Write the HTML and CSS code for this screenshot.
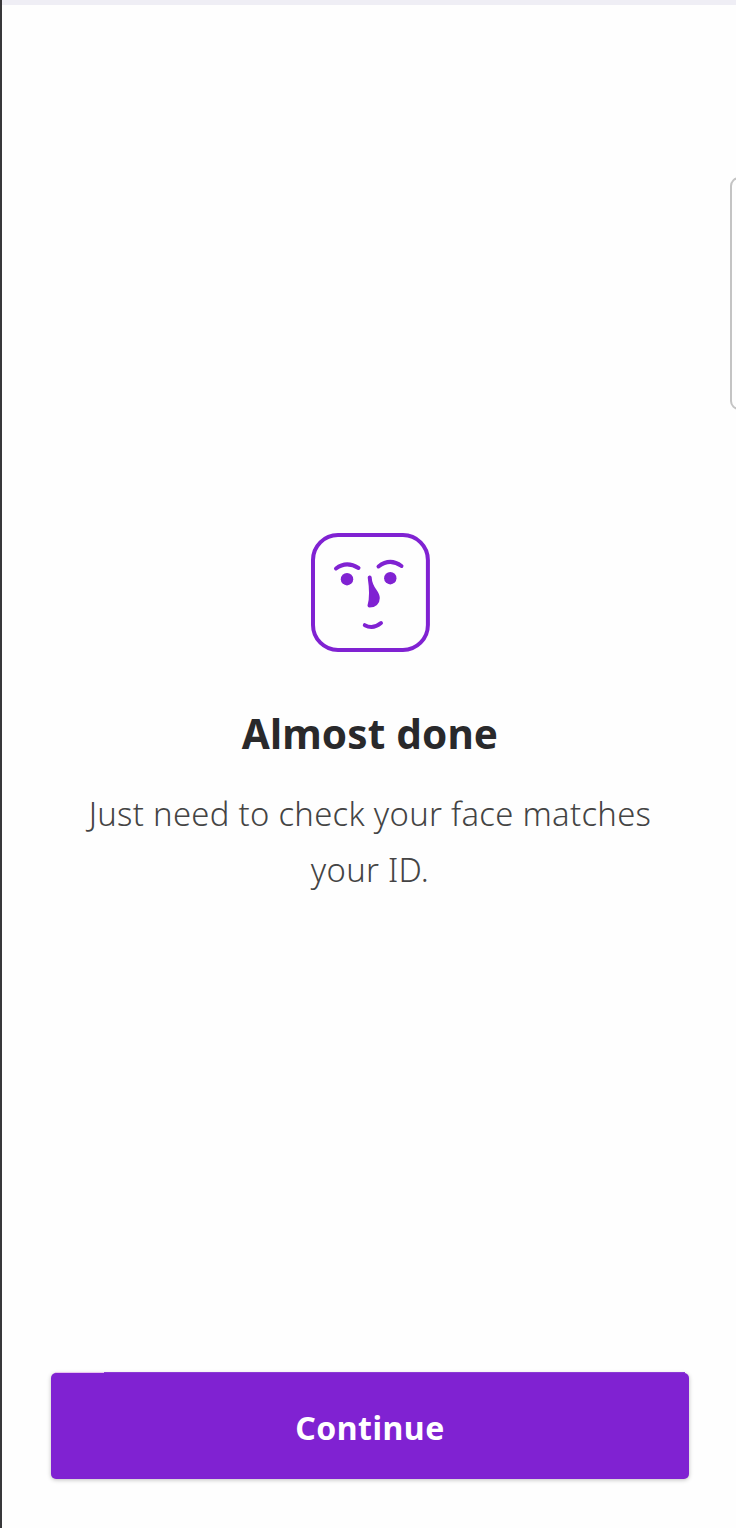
FILE: index.html
```html
<!DOCTYPE html>
<html lang="en">
<head>
<meta charset="utf-8">
<title>Almost done</title>
<link rel="stylesheet" href="styles.css">
</head>
<body>
<main class="screen">
  <section class="intro">
    <svg class="face" viewBox="0 0 120 120" fill="none" stroke="#8022d2" stroke-width="4" stroke-linecap="round" stroke-linejoin="round" aria-hidden="true">
      <rect x="3" y="3" width="114.900" height="115" rx="25"/>
      <path d="M26 36.500Q36.500 28.500 48.500 36"/>
      <path d="M68.500 34.500Q80 25.500 91.500 34"/>
      <circle cx="37" cy="47.200" r="6.200" fill="#8022d2" stroke="none"/>
      <circle cx="80.300" cy="46.200" r="6.200" fill="#8022d2" stroke="none"/>
      <path d="M59.700 45.500C60.300 57.500 67.800 59 67.800 66C67.800 70.500 64.800 73.500 59.500 73.500C61.500 67 61 54 59.700 45.500Z" fill="#8022d2"/>
      <path d="M54.800 93.200C60.500 96.200 66.500 94.800 71 91"/>
    </svg>
    <h1 class="title">Almost done</h1>
    <p class="text">Just need to check your face matches<br>your ID.</p>
  </section>
  <button class="continue" type="button">Continue</button>
  <div class="next-panel"></div>
</main>
</body>
</html>
```
FILE: styles.css
```css
* {
  box-sizing: border-box;
}

body {
  margin: 0;
  background: #fefefe;
  font-family: "Noto Sans", "Open Sans", sans-serif;
}

.screen {
  position: relative;
  display: flex;
  flex-direction: column;
  justify-content: space-between;
  height: 1528px;
  padding: 0 47px 49px 49px;
  overflow: hidden;
  border-left: 2px solid #38383a;
  box-shadow: inset 0 5px #efeef5;
}

.intro {
  display: flex;
  flex-direction: column;
  align-items: center;
  padding-top: 532px;
}

.face {
  display: block;
  width: 120px;
  height: 120px;
}

.title {
  margin: 53px 0 0;
  color: #29292b;
  font-size: 40.500px;
  font-weight: 700;
  line-height: 58px;
  letter-spacing: 0.150px;
  white-space: nowrap;
}

.text {
  margin: 23px 0 0;
  color: #444;
  font-size: 32.800px;
  font-weight: 300;
  line-height: 56px;
  letter-spacing: 0.300px;
  text-align: center;
  white-space: nowrap;
}

.continue {
  position: relative;
  width: 638px;
  height: 106px;
  padding: 4px 0 0;
  border: 0;
  border-radius: 5px;
  background: #8022d2;
  box-shadow: 0 1px 4px rgba(0, 0, 0, 0.25);
  color: #fff;
  font-family: inherit;
  font-size: 32px;
  font-weight: 700;
  line-height: 46px;
  letter-spacing: 0.500px;
}

/* Highlight along the top edge of the button */
.continue::before {
  position: absolute;
  top: -1px;
  left: 4px;
  width: 630px;
  height: 1px;
  background: linear-gradient(90deg, #e9c3ef 49px, #8b3ad5 49px);
  content: "";
}

/* Edge of the neighbouring panel peeking in from the right */
.next-panel {
  position: absolute;
  top: 177px;
  left: 728px;
  width: 60px;
  height: 233px;
  border: 2px solid #c4c4c4;
  border-radius: 9px;
}
```
